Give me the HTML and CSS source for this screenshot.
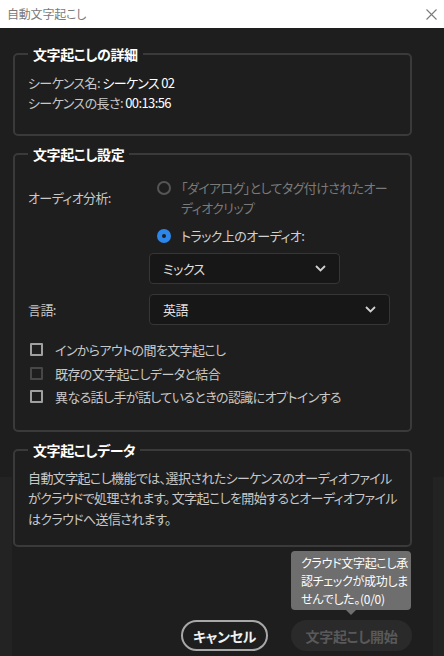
FILE: index.html
```html
<!DOCTYPE html>
<html lang="ja">
<head>
<meta charset="utf-8">
<title>自動文字起こし</title>
<link rel="stylesheet" href="styles.css">
</head>
<body>
<header class="titlebar">
  <span class="title">自動文字起こし</span>
  <svg class="close" width="11" height="11" viewBox="0 0 11 11"><path d="M0.5 0.5L10.5 10.5M10.5 0.5L0.5 10.5" stroke="#7a7a7a" stroke-width="1.1" fill="none"/></svg>
</header>
<main class="content">
  <fieldset class="group g-details">
    <legend class="legend">文字起こしの詳細</legend>
    <div class="line"><span class="lbl">シーケンス名:</span> <span class="val">シーケンス 02</span></div>
    <div class="line"><span class="lbl">シーケンスの長さ:</span> <span class="val">00:13:56</span></div>
  </fieldset>

  <fieldset class="group g-settings">
    <legend class="legend">文字起こし設定</legend>
    <div class="form-grid">
      <div class="label label-audio">オーディオ分析:</div>
      <div class="radios">
        <div class="radio disabled">
          <span class="radio-dot"></span>
          <span class="radio-text">「ダイアログ」としてタグ付けされたオー<br>ディオクリップ</span>
        </div>
        <div class="radio checked">
          <span class="radio-dot"></span>
          <span class="radio-text">トラック上のオーディオ:</span>
        </div>
        <div class="select select-mix">
          <span>ミックス</span>
          <svg class="chev" width="11" height="7" viewBox="0 0 11 7"><path d="M1 1L5.5 5.5L10 1" stroke="#d0d0d0" stroke-width="1.8" fill="none"/></svg>
        </div>
      </div>
      <div class="label label-lang">言語:</div>
      <div class="select select-lang">
        <span>英語</span>
        <svg class="chev" width="11" height="7" viewBox="0 0 11 7"><path d="M1 1L5.5 5.5L10 1" stroke="#d0d0d0" stroke-width="1.8" fill="none"/></svg>
      </div>
    </div>
    <div class="checks">
      <div class="check"><span class="box"></span><span>インからアウトの間を文字起こし</span></div>
      <div class="check disabled"><span class="box"></span><span>既存の文字起こしデータと結合</span></div>
      <div class="check"><span class="box"></span><span>異なる話し手が話しているときの認識にオプトインする</span></div>
    </div>
  </fieldset>

  <fieldset class="group g-data">
    <legend class="legend">文字起こしデータ</legend>
    <p class="para">自動文字起こし機能では、選択されたシーケンスのオーディオファイル<br>がクラウドで処理されます。 文字起こしを開始するとオーディオファイル<br>はクラウドへ送信されます。</p>
  </fieldset>

  <div class="actions">
    <button class="btn btn-cancel">キャンセル</button>
    <div class="start-wrap">
      <div class="tooltip">クラウド文字起こし承<br>認チェックが成功しま<br>せんでした。(0/0)</div>
      <button class="btn btn-start" disabled>文字起こし開始</button>
    </div>
  </div>
</main>
</body>
</html>
```
FILE: styles.css
```css
html, body {
  margin: 0;
  padding: 0;
}
body {
  width: 444px;
  height: 656px;
  overflow: hidden;
  background-color: #1e1e1e;
  background-image: linear-gradient(to right, #232323 0, #232323 12px, transparent 12px, transparent 433px, #232323 433px);
  background-repeat: no-repeat;
  background-position: 0 477px;
  background-size: 444px 179px;
  font-family: "Noto Sans CJK JP", sans-serif;
  font-feature-settings: "palt";
  font-size: 13px;
  letter-spacing: -0.6px;
  color: #c8c8c8;
}
.titlebar {
  height: 28px;
  background: #ffffff;
  display: flex;
  align-items: center;
  justify-content: space-between;
  padding: 0 7px 0 7px;
  box-sizing: border-box;
}
.title {
  font-size: 12px;
  letter-spacing: -0.2px;
  color: #7a7a7a;
  line-height: 16px;
}
.close {
  display: block;
}
.content {
  padding: 16px 32px 0 13px;
}
.group {
  margin: 0;
  border: 2px solid #3a3a3a;
  border-radius: 5px;
  padding: 9px 13px 21px;
  min-width: 0;
}
.group + .group {
  margin-top: 8px;
}
.legend {
  padding: 0 5px;
  font-size: 14px;
  line-height: 20px;
  font-weight: bold;
  letter-spacing: -0.4px;
  color: #ffffff;
}
.line {
  line-height: 20px;
}
.val {
  color: #ffffff;
}
.g-settings {
  padding-top: 14px;
}
.form-grid {
  display: grid;
  grid-template-columns: 121px 1fr;
  align-items: start;
}
.label {
  line-height: 20px;
}
.label-audio {
  margin-top: 10px;
}
.label-lang {
  align-self: center;
  margin-top: 10px;
}
.radios {
  display: flex;
  flex-direction: column;
}
.radio {
  display: flex;
  align-items: flex-start;
  padding-left: 8px;
  line-height: 20px;
}
.radio-text {
  white-space: nowrap;
}
.radio + .radio {
  margin-top: 8px;
}
.radio-dot {
  width: 14px;
  height: 14px;
  box-sizing: border-box;
  border-radius: 50%;
  margin-top: 3px;
  margin-right: 10px;
  flex: none;
  position: relative;
}
.radio.disabled .radio-dot {
  border: 2px solid #555555;
}
.radio.disabled .radio-text {
  color: #7a7a7a;
}
.radio.checked .radio-dot {
  background: #2d86ea;
}
.radio.checked .radio-dot::after {
  content: "";
  position: absolute;
  left: 5px;
  top: 5px;
  width: 4px;
  height: 4px;
  border-radius: 50%;
  background: #1e1e1e;
}
.radio.checked .radio-text {
  color: #d0d0d0;
}
.select {
  height: 31px;
  box-sizing: border-box;
  background: #171717;
  border: 1px solid #363636;
  border-radius: 4px;
  display: flex;
  align-items: center;
  justify-content: space-between;
  padding: 0 13px 0 13px;
  color: #e0e0e0;
}
.select-mix {
  width: 191px;
  margin-top: 7px;
}
.select-lang {
  width: 241px;
  margin-top: 10px;
}
.chev {
  display: block;
}
.checks {
  margin-top: 13px;
  display: flex;
  flex-direction: column;
}
.check {
  display: flex;
  align-items: center;
  height: 23.5px;
}
.box {
  width: 13px;
  height: 13px;
  box-sizing: border-box;
  border: 2px solid #a0a0a0;
  border-radius: 1px;
  margin-left: 2px;
  margin-right: 12px;
  flex: none;
}
.check.disabled .box {
  border-color: #474747;
}
.g-data {
  padding-top: 8px;
  padding-bottom: 16px;
}
.para {
  margin: 0;
  line-height: 20.5px;
  white-space: nowrap;
}
.actions {
  margin-top: 73px;
  display: flex;
  justify-content: flex-end;
  gap: 23px;
}
.btn {
  font-family: inherit;
  font-feature-settings: "palt";
  font-size: 14px;
  font-weight: bold;
  letter-spacing: -0.3px;
  height: 31px;
  border-radius: 16px;
  padding: 0;
  box-sizing: border-box;
  cursor: default;
}
.btn-cancel {
  width: 87px;
  background: transparent;
  border: 2px solid #a8a8a8;
  color: #f0f0f0;
}
.start-wrap {
  position: relative;
}
.btn-start {
  width: 121px;
  background: #2a2a2a;
  border: none;
  color: #595959;
}
.tooltip {
  position: absolute;
  left: 0;
  bottom: calc(100% + 10px);
  width: 120px;
  box-sizing: border-box;
  padding: 3px 10px 2px;
  background: #6e6e6e;
  border-radius: 4px;
  font-size: 12px;
  letter-spacing: -0.3px;
  line-height: 18px;
  color: #ffffff;
  white-space: nowrap;
}
.tooltip::after {
  content: "";
  position: absolute;
  left: 55px;
  top: 100%;
  border-left: 5px solid transparent;
  border-right: 5px solid transparent;
  border-top: 5px solid #6e6e6e;
}
```
